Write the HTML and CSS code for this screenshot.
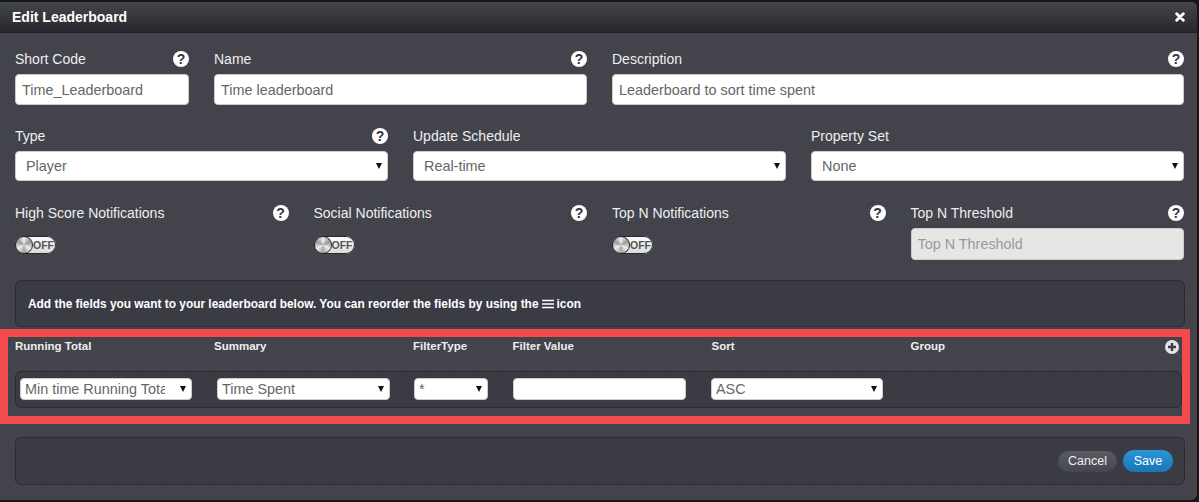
FILE: index.html
```html
<!DOCTYPE html>
<html lang="en">
<head>
  <meta charset="UTF-8">
  <title>Edit Leaderboard</title>
  <link rel="stylesheet" href="styles.css">
</head>
<body>
  <div class="modal">
    <div class="modal-header">
      <h3>Edit Leaderboard</h3>
      <svg class="close" width="10" height="10" viewBox="0 0 12 12"><path d="M2 2l8 8M10 2l-8 8" stroke="#fff" stroke-width="3.4" stroke-linecap="round"/></svg>
    </div>

    <div class="modal-body">
      <div class="grid row-one">
        <div class="field span-2">
          <div class="field-label"><label>Short Code</label><span class="help">?</span></div>
          <input type="text" value="Time_Leaderboard">
        </div>
        <div class="field span-4">
          <div class="field-label"><label>Name</label><span class="help">?</span></div>
          <input type="text" value="Time leaderboard">
        </div>
        <div class="field span-6">
          <div class="field-label"><label>Description</label><span class="help">?</span></div>
          <input type="text" value="Leaderboard to sort time spent">
        </div>
      </div>

      <div class="grid row-two">
        <div class="field span-4">
          <div class="field-label"><label>Type</label><span class="help">?</span></div>
          <div class="select"><select><option>Player</option></select></div>
        </div>
        <div class="field span-4">
          <div class="field-label"><label>Update Schedule</label></div>
          <div class="select"><select><option>Real-time</option></select></div>
        </div>
        <div class="field span-4">
          <div class="field-label"><label>Property Set</label></div>
          <div class="select"><select><option>None</option></select></div>
        </div>
      </div>

      <div class="grid row-three">
        <div class="field span-3">
          <div class="field-label"><label>High Score Notifications</label><span class="help">?</span></div>
          <div class="toggle"><span class="knob"></span><span>OFF</span></div>
        </div>
        <div class="field span-3">
          <div class="field-label"><label>Social Notifications</label><span class="help">?</span></div>
          <div class="toggle"><span class="knob"></span><span>OFF</span></div>
        </div>
        <div class="field span-3">
          <div class="field-label"><label>Top N Notifications</label><span class="help">?</span></div>
          <div class="toggle"><span class="knob"></span><span>OFF</span></div>
        </div>
        <div class="field span-3">
          <div class="field-label"><label>Top N Threshold</label><span class="help">?</span></div>
          <input type="text" placeholder="Top N Threshold" disabled>
        </div>
      </div>

      <div class="well hint">
        Add the fields you want to your leaderboard below. You can reorder the fields by using the
        <svg class="bars" width="12" height="10" viewBox="0 0 12 10"><path d="M0 1.5h12M0 5h12M0 8.5h12" stroke="#fff" stroke-width="1.7"/></svg>
        icon
      </div>

      <div class="fields">
        <div class="grid fields-head">
          <span class="span-2">Running Total</span>
          <span class="span-2">Summary</span>
          <span class="span-1">FilterType</span>
          <span class="span-2">Filter Value</span>
          <span class="span-2">Sort</span>
          <span class="span-3 group-head">Group
            <svg width="14" height="14" viewBox="0 0 14 14"><circle cx="7" cy="7" r="7" fill="#e4e4e4"/><path d="M7 3v8M3 7h8" stroke="#3a3b43" stroke-width="2.4"/></svg>
          </span>
        </div>
        <div class="fields-row">
          <div class="select col-running"><select><option>Min time Running Total</option></select></div>
          <div class="select col-summary"><select><option>Time Spent</option></select></div>
          <div class="select col-filter"><select><option>*</option></select></div>
          <input class="col-value" type="text">
          <div class="select col-sort"><select><option>ASC</option></select></div>
        </div>
      </div>

      <div class="well footer">
        <button class="btn">Cancel</button>
        <button class="btn btn-save">Save</button>
      </div>
    </div>

    <div class="annotation"></div>
  </div>
</body>
</html>
```

FILE: styles.css
```css
* {
  box-sizing: border-box;
}

html, body {
  height: 100%;
}

body {
  margin: 0;
  padding: 2px 2px 2px 0;
  background-color: #17171a;
  font-family: "Liberation Sans", Arial, sans-serif;
  overflow: hidden;
}

.modal {
  position: relative;
  height: 498px;
  border-radius: 0 6px 6px 0;
  overflow: hidden;
  background-color: #42434b;
  background-image:
    repeating-linear-gradient(90deg, rgba(255, 255, 255, 0.012) 0 1px, transparent 1px 3px),
    repeating-linear-gradient(0deg, rgba(0, 0, 0, 0.03) 0 1px, transparent 1px 3px);
}

.modal-header {
  height: 31px;
  padding: 0 12px 0 12px;
  display: flex;
  align-items: center;
  justify-content: space-between;
  background: linear-gradient(#45454d, #26262c);
  border-bottom: 1px solid #1f1f24;
}

.modal-header h3 {
  margin: 0;
  font-size: 14px;
  color: #fff;
}

.modal-body {
  padding: 0 13px 0 15px;
}

.grid {
  display: grid;
  grid-template-columns: repeat(12, 1fr);
  column-gap: 25px;
}

.span-1 { grid-column: span 1; }
.span-2 { grid-column: span 2; }
.span-3 { grid-column: span 3; }
.span-4 { grid-column: span 4; }
.span-6 { grid-column: span 6; }

.row-one {
  padding-top: 16px;
}

.row-two {
  padding-top: 21px;
}

.row-three {
  padding-top: 22px;
  height: 99px;
}

.field-label {
  height: 20px;
  margin-bottom: 5px;
  display: flex;
  align-items: center;
  justify-content: space-between;
  color: #eee;
  font-size: 14px;
}

.help {
  width: 16px;
  height: 16px;
  border-radius: 50%;
  background: #fff;
  color: #33343b;
  font-size: 14px;
  font-weight: bold;
  line-height: 16px;
  text-align: center;
}

input, select {
  width: 100%;
  height: 31px;
  border: 1px solid #ccc;
  border-radius: 4px;
  background: #fff;
  color: #666;
  font-family: inherit;
  font-size: 14.4px;
  padding: 0 6px;
}

input:disabled {
  background: #e6e6e6;
  height: 32px;
}

input::placeholder {
  color: #999;
}

.select {
  position: relative;
}

.select select {
  display: block;
  height: 30px;
  appearance: none;
  padding: 0 26px 0 10px;
}

.select::after {
  content: "";
  position: absolute;
  right: 6px;
  top: 50%;
  margin-top: -3px;
  border-left: 3px solid transparent;
  border-right: 3px solid transparent;
  border-top: 6px solid #111;
}

.toggle {
  width: 41px;
  height: 18px;
  margin-top: 13px;
  display: flex;
  align-items: center;
  border-radius: 9px;
  background: linear-gradient(#fff, #d8d8d8);
  box-shadow: inset 0 0 0 1px #2a2a2f;
  color: #555;
  font-size: 10.5px;
  font-weight: bold;
}

.knob {
  width: 18px;
  height: 18px;
  flex: none;
  border-radius: 50%;
  border: 1px solid #26262b;
  background: conic-gradient(#eee, #999, #eee, #a5a5a5, #eee, #999, #eee);
}

.well {
  border: 1px solid #2c2d33;
  border-radius: 6px;
  background: #3a3b43;
  width: 1170px;
}

.hint {
  height: 47px;
  padding-left: 12px;
  display: flex;
  align-items: center;
  gap: 3px;
  color: #fff;
  font-size: 11.9px;
  font-weight: bold;
}

.fields {
  padding-top: 13px;
  height: 110px;
}

.fields-head {
  height: 31px;
  color: #eee;
  font-size: 11.5px;
  font-weight: bold;
  align-items: start;
}

.group-head {
  display: flex;
  justify-content: space-between;
  padding-right: 5px;
}

.fields-row {
  width: 1167px;
  height: 37px;
  display: flex;
  align-items: center;
  padding-left: 4px;
  padding-bottom: 1px;
  background: #3a3b43;
  border: 1px solid #2c2d33;
  border-radius: 6px;
}

.fields-row input,
.fields-row select {
  height: 22px;
  padding-left: 4px;
}

.col-running { width: 172px; margin-right: 25px; }
.col-summary { width: 173px; margin-right: 24px; }
.col-filter { width: 74px; margin-right: 25px; }
.col-value { width: 173px; margin-right: 25px; }
.col-sort { width: 172px; }

.footer {
  height: 48px;
  padding-right: 11px;
  display: flex;
  align-items: center;
  justify-content: flex-end;
  gap: 6px;
}

.btn {
  height: 21px;
  width: 59px;
  padding: 0;
  border: none;
  border-radius: 11px;
  background: linear-gradient(#5a5b63, #45464e);
  color: #eee;
  font-family: inherit;
  font-size: 12.5px;
}

.btn-save {
  height: 22px;
  width: 50px;
  background: linear-gradient(#2a96d8, #1a74b4);
  color: #fff;
}

/* red box drawn over the screenshot */
.annotation {
  position: absolute;
  left: 0;
  top: 327px;
  width: 1190px;
  height: 95px;
  border: 8px solid #f34a4f;
  pointer-events: none;
}
```
